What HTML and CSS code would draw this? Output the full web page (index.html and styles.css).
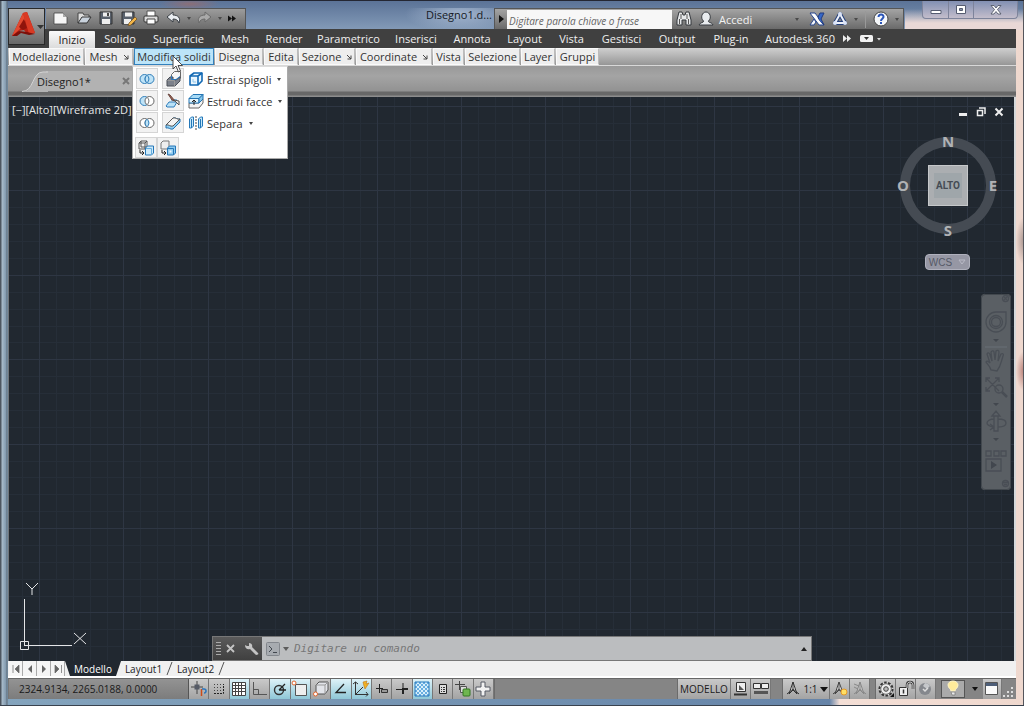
FILE: index.html
```html
<!DOCTYPE html>
<html lang="it">
<head>
<meta charset="utf-8">
<meta name="viewport" content="width=device-width, initial-scale=1">
<title>Disegno1.dwg</title>
<link rel="stylesheet" href="styles.css">
</head>
<body>
<div class="window">
  <header class="header">
    <button class="app-button" aria-label="Menu applicazione">
      <svg width="36" height="36" viewBox="0 0 36 36"><path d="M3 27 14 4l4-1 8 21-8 1-3-4-5 1-2 4z" fill="#b51e12"/><path d="M14 4l4-1 8 21-6 1z" fill="#d93a24"/><path d="M14 4 3 27l8-7 5-9z" fill="#e24a30"/><path d="M3 27l7-5 8 1 8 2-6 1-8-2-4 3z" fill="#7d0f0a"/><path d="M10 18l5-8 3 9-4 2z" fill="#8f140c"/><path d="M28 16h7l-3.500 4z" fill="#333"/></svg>
    </button>
    <div class="header-main">
      <div class="title-row">
        <div class="quick">
          <button aria-label="Nuovo"><svg width="18" height="16" viewBox="0 0 18 16"><path d="M2 3h9l4 4v7H2z" fill="#f6f6f6" stroke="#444" stroke-width=".8"/><path d="M11 3v4h4z" fill="#aaa"/></svg></button>
          <button aria-label="Apri"><svg width="18" height="16" viewBox="0 0 18 16"><path d="M3 13V3h5l1 2h5v2" fill="#ddd" stroke="#444"/><path d="M3 13 7 7h9l-4 6z" fill="#c9d2dc" stroke="#333"/></svg></button>
          <button aria-label="Salva"><svg width="18" height="16" viewBox="0 0 18 16"><path d="M3 2h12v12H3z" fill="#59616c" stroke="#333"/><path d="M6 2.500h7v4H6zM5 9h8v5H5z" fill="#eee"/><path d="M10 3h2v3h-2z" fill="#444"/></svg></button>
          <button aria-label="Salva con nome"><svg width="18" height="16" viewBox="0 0 18 16"><path d="M2 2h12v12H2z" fill="#59616c" stroke="#333"/><path d="M5 2.500h7v4H5zM4 9h7v5H4z" fill="#eee"/><path d="M9 13l6-6 2 2-6 6-3 1z" fill="#f1b448" stroke="#674a20" stroke-width=".7"/></svg></button>
          <button aria-label="Stampa"><svg width="18" height="16" viewBox="0 0 18 16"><path d="M5 6V1h8v5" fill="#fff" stroke="#555"/><rect x="2" y="6" width="14" height="6" rx="1" fill="#ddd" stroke="#333"/><path d="M5 9h8v5H5z" fill="#fff" stroke="#444"/></svg></button>
          <button aria-label="Annulla"><svg width="18" height="16" viewBox="0 0 18 16"><path d="M2 7l6-5v3c5 0 8 3 6 8-1-3-3-4-6-4v3z" fill="#e9edf1" stroke="#3b4046"/></svg></button>
          <i class="caret dim"></i>
          <button aria-label="Ripeti"><svg width="18" height="16" viewBox="0 0 18 16"><path d="M15 7 9 2v3c-5 0-8 3-6 8 1-3 3-4 6-4v3z" fill="#a9a9a9" stroke="#6a6a6a"/></svg></button>
          <i class="caret dim"></i>
          <button aria-label="Altro"><svg width="10" height="16" viewBox="0 0 10 16"><path d="M1 5.500l4 3-4 3zM5 5.500l4 3-4 3z" fill="#111"/></svg></button>
        </div>
        <div class="doc-title">Disegno1.d...</div>
        <div class="info-center">
          <button class="search-toggle" aria-label="Mostra ricerca"><svg width="12" height="20"><path d="M4 6l5 4-5 4z" fill="#111"/></svg></button>
          <input class="search" type="text" aria-label="Ricerca" placeholder="Digitare parola chiave o frase">
          <button aria-label="Cerca"><svg width="16" height="16" viewBox="0 0 16 16"><path d="M3 1h3l1 3h2l1-3h3l2 8v5h-5v-5H6v5H1V9z" fill="#e6e8ea" stroke="#34383d"/><path d="M3.500 8v5M12.500 8v5M5 3v5M11 3v5" stroke="#555"/></svg></button>
          <button class="sign-in"><svg width="16" height="16" viewBox="0 0 16 16"><path d="M1 14c1-3 5-2 4.500-4C2 7 4 1 8 1s6 6 2.500 9c-.5 2 3.500 1 4.500 4z" fill="#e9ecef" stroke="#373b40"/></svg><span>Accedi</span><i class="caret dim"></i></button>
          <button aria-label="Exchange"><svg width="16" height="16" viewBox="0 0 16 16"><path d="M1 2h5l9 12h-5z" fill="#f3f5fa" stroke="#28468e"/><path d="M15 2h-4L9 6l1.500 4L15 14l-3-6z" fill="#3768c8" stroke="#223c80"/><path d="M1 14l4-6 2 3-2 3z" fill="#f3f5fa" stroke="#28468e"/><path d="M2.500 3H5l8 10h-2z" fill="#fff"/></svg></button>
          <button class="share" aria-label="Connetti"><svg width="16" height="16" viewBox="0 0 16 16"><path d="M8 3 3 12h10z" fill="none" stroke="#25407c" stroke-width="4" stroke-linejoin="round"/><path d="M8 3 3 12h10z" fill="none" stroke="#eef2fa" stroke-width="2"/><circle cx="8" cy="3" r="2" fill="#dbe4f8"/><circle cx="3" cy="12" r="2" fill="#dbe4f8"/><circle cx="13" cy="12" r="2" fill="#dbe4f8"/></svg><i class="caret dim"></i></button>
          <span class="divider"></span>
          <button class="help" aria-label="Guida"><svg width="16" height="16" viewBox="0 0 16 16"><circle cx="8" cy="8" r="7" fill="#f5f7fa" stroke="#444"/><path d="M5.500 6c0-3.500 5.500-3 5 0-.3 1.700-2.500 1.800-2.500 4M8 11v2" fill="none" stroke="#2b55b8" stroke-width="2"/></svg><i class="caret dim"></i></button>
        </div>
        <div class="window-buttons">
          <button aria-label="Riduci a icona"><svg width="12" height="10"><path d="M1 5.500h10v3H1z" fill="#fff" stroke="#555c70"/></svg></button>
          <button aria-label="Ripristina"><svg width="12" height="10"><path d="M1.500.5h9v8h-9z" fill="#fff" stroke="#555c70"/><path d="M4.500 3.500h3v2h-3z" fill="#8a93a8" stroke="#555c70"/></svg></button>
          <button aria-label="Chiudi"><svg width="12" height="10"><path d="M1 .500h3l2 2.500 2-2.500h3L7.500 4.500 11 9H8L6 6.500 4 9H1l3.500-4.500z" fill="#fff" stroke="#454b5c" stroke-width=".8"/></svg></button>
        </div>
      </div>
      <nav class="ribbon-tabs">
        <button class="active">Inizio</button><button>Solido</button><button>Superficie</button><button>Mesh</button><button>Render</button><button>Parametrico</button><button>Inserisci</button><button>Annota</button><button>Layout</button><button>Vista</button><button>Gestisci</button><button>Output</button><button>Plug-in</button><button>Autodesk 360</button>
        <button class="more" aria-label="Altre schede"><svg width="40" height="9"><path d="M1 1l4 3.500L1 8zM5 1l4 3.500L5 8z" fill="#eee"/><rect x="18" y="1" width="13" height="7" rx="1.500" fill="#f2f2f2"/><path d="M22 3h5l-2.500 3z" fill="#333"/><path d="M35 4h4l-2 2.500z" fill="#ddd"/></svg></button>
      </nav>
    </div>
  </header>

  <div class="panels">
    <button>Modellazione</button>
    <button>Mesh <svg class="launch" viewBox="0 0 6 6"><path d="M1 1l4 4M5 1.500V5H1.500" /></svg></button>
    <div class="panel-open">
      <button class="selected">Modifica solidi</button>
      <div class="flyout">
        <div class="tool-row">
          <button class="tool" aria-label="Unione"><svg width="16" height="14" viewBox="0 0 16 14"><g fill="#bfe3f7" stroke="#2f7db8"><circle cx="5.500" cy="7" r="4.500"/><circle cx="10.500" cy="7" r="4.500"/><path d="M8 3.300a4.500 4.500 0 0 0 0 7.400 4.500 4.500 0 0 0 0-7.400z"/></g></svg></button>
          <button class="tool" aria-label="Premi o tira"><svg width="17" height="16" viewBox="0 0 17 16"><path d="M6.500 8V3.500l3-3h6V7l-4 4z" fill="#f7f7f7" stroke="#666"/><path d="M2 9l3-3h3v3h3l4-3v4l-5 5H2z" fill="#7c818b" stroke="#4a4e57"/><path d="M2.500 9.500h7V15" fill="none" stroke="#999"/><path d="M6.500 5v3.500h4.500l4-3" fill="none" stroke="#2c79bd"/></svg></button>
          <button class="action"><svg width="16" height="16" viewBox="0 0 16 16"><path d="M2 5l4-3h8v8l-4 4H2z" fill="#eaf6fd" stroke="#1268b3" stroke-width="1.600" stroke-linejoin="round"/><path d="M2 5h8v9M10 5l4-3" fill="none" stroke="#1268b3" stroke-width="1.600"/><path d="M5 8v3h3" fill="none" stroke="#8fc4ea"/></svg><span>Estrai spigoli</span><i class="caret"></i></button>
        </div>
        <div class="tool-row">
          <button class="tool" aria-label="Sottrai"><svg width="16" height="14" viewBox="0 0 16 14"><circle cx="5.500" cy="7" r="4.500" fill="#bfe3f7" stroke="#2f7db8"/><circle cx="10.500" cy="7" r="4.500" fill="#fff" stroke="#666"/><path d="M8 3.300a4.500 4.500 0 0 1 0 7.400" fill="none" stroke="#777"/></svg></button>
          <button class="tool" aria-label="Trancia"><svg width="17" height="16" viewBox="0 0 17 16"><path d="M1 13l3-4h8l-3 5H2z" fill="#b9e1f7" stroke="#2e7dbb"/><path d="M6 7h6" stroke="#2e7dbb"/><path d="M3 1l2 1 5 6-3-1z" fill="#a66553" stroke="#68463e"/><path d="M9 7l5 5v-4z" fill="#eee" stroke="#555"/></svg></button>
          <button class="action"><svg width="16" height="16" viewBox="0 0 16 16"><path d="M1 10h10l4-4v4l-4 5H1z" fill="#f3f3f3" stroke="#666"/><path d="M1 5.500l4-4h10l-4 4z" fill="#a8dbf6" stroke="#2374b3"/><path d="M1 5.500h10V10H1z" fill="#e2f4fc" stroke="#2374b3"/><path d="M11 5.500l4-4V6l-4 4z" fill="#86c7eb" stroke="#2374b3"/><path d="M6 12V7M4 9l2-2 2 2" fill="none" stroke="#222"/></svg><span>Estrudi facce</span><i class="caret"></i></button>
        </div>
        <div class="tool-row">
          <button class="tool" aria-label="Interseca"><svg width="16" height="14" viewBox="0 0 16 14"><circle cx="5.500" cy="7" r="4.500" fill="#fff" stroke="#666"/><circle cx="10.500" cy="7" r="4.500" fill="#fff" stroke="#666"/><path d="M8 3.300a4.500 4.500 0 0 0 0 7.400 4.500 4.500 0 0 0 0-7.400z" fill="#bfe3f7" stroke="#2f7db8"/></svg></button>
          <button class="tool" aria-label="Ispessisci"><svg width="17" height="16" viewBox="0 0 17 16"><path d="M1 10l7-7c3-1 4 2 7 1v3l-7 7c-3 1-4-2-7-1z" fill="#8fcdf0" stroke="#2575b5"/><path d="M1 10l7-7c3-1 4 2 7 1l-7 7c-3 1-4-2-7-1z" fill="#f4f4f4" stroke="#555"/></svg></button>
          <button class="action"><svg width="16" height="16" viewBox="0 0 16 16"><path d="M1.500 4l2-2h2v9l-2 2h-2zM3.500 4v9M10.500 4l2-2h2v9l-2 2h-2zM12.500 4v9" fill="#c5e7f8" stroke="#2578b9"/><path d="M8 1v14" stroke="#444" stroke-dasharray="2 1"/></svg><span>Separa</span><i class="caret"></i></button>
        </div>
        <div class="tool-row last">
          <button class="tool" aria-label="Imprimi"><svg width="17" height="16" viewBox="0 0 17 16"><path d="M1 3l2-2h6v6L7 9H1zM1 3h6v6M7 3l2-2M3 1v6h6" fill="none" stroke="#555"/><path d="M7.500 8l2-2h6v7l-2 2h-6z" fill="#cdeafa" stroke="#2477b8"/><path d="M8 8.500h5.500V15" fill="none" stroke="#66aede"/><path d="M2 10v3h3M4 11l2 2-2 2" fill="none" stroke="#222"/></svg></button>
          <button class="tool" aria-label="Scava solido"><svg width="17" height="16" viewBox="0 0 17 16"><path d="M1 3l2-2h6v6L7 9H1z" fill="#eee" stroke="#777"/><path d="M7.500 8l2-2h6v7l-2 2h-6z" fill="#8fcbf0" stroke="#2477b8"/><path d="M7.500 8.500h6V15" fill="none" stroke="#2477b8"/><path d="M9.500 10.500h2v2h-2z" fill="#eef8fe"/><path d="M2 10v3h3M4 11l2 2-2 2" fill="none" stroke="#222"/></svg></button>
        </div>
      </div>
      <svg class="cursor" width="12" height="18" viewBox="0 0 12 18"><path d="M1 1v13l3-3 2.500 6 2-1L6 10.500h4.500z" fill="#fff" stroke="#4a4a4a"/></svg>
    </div>
    <button>Disegna</button>
    <button>Edita</button>
    <button>Sezione <svg class="launch" viewBox="0 0 6 6"><path d="M1 1l4 4M5 1.500V5H1.500"/></svg></button>
    <button>Coordinate <svg class="launch" viewBox="0 0 6 6"><path d="M1 1l4 4M5 1.500V5H1.500"/></svg></button>
    <button>Vista</button>
    <button>Selezione</button>
    <button>Layer</button>
    <button>Gruppi</button>
  </div>

  <div class="file-tabs">
    <div class="file-tab">
      <svg class="tab-slope" width="26" height="21" viewBox="0 0 26 21"><path d="M0 21C12 21 10 1 21 1h5v20z" fill="#b2b2b2"/><path d="M0 20.500C12 20.500 10 1 21 1h5" fill="none" stroke="#d4d4d4"/></svg>
      <span>Disegno1*</span>
      <button aria-label="Chiudi disegno"><svg width="8" height="8"><path d="M1 1l6 6M7 1 1 7" stroke="#777" stroke-width="2"/></svg></button>
    </div>
  </div>

  <main class="canvas">
    <svg class="grid" width="100%" height="100%" aria-hidden="true">
      <defs><pattern id="grid" x="30" y="9" width="422" height="422" patternUnits="userSpaceOnUse">
        <path class="minor" d="M17.500 0v422M34.500 0v422M51.500 0v422M68.500 0v422M101.500 0v422M118.500 0v422M135.500 0v422M152.500 0v422M186.500 0v422M203.500 0v422M220.500 0v422M236.500 0v422M270.500 0v422M287.500 0v422M304.500 0v422M321.500 0v422M355.500 0v422M371.500 0v422M388.500 0v422M405.500 0v422M0 17.500h422M0 34.500h422M0 51.500h422M0 68.500h422M0 101.500h422M0 118.500h422M0 135.500h422M0 152.500h422M0 186.500h422M0 203.500h422M0 220.500h422M0 236.500h422M0 270.500h422M0 287.500h422M0 304.500h422M0 321.500h422M0 355.500h422M0 371.500h422M0 388.500h422M0 405.500h422"/>
        <path class="major" d="M.5 0v422M84.500 0v422M169.500 0v422M253.500 0v422M338.500 0v422M0 .5h422M0 84.500h422M0 169.500h422M0 253.500h422M0 338.500h422"/>
      </pattern></defs>
      <rect width="100%" height="100%" fill="url(#grid)"/>
    </svg>
    <div class="view-label">[−][Alto][Wireframe 2D]</div>
    <div class="doc-buttons">
      <button aria-label="Riduci"><svg width="10" height="10"><path d="M1 6h8v3H1z" fill="#eee"/></svg></button>
      <button aria-label="Ripristina"><svg width="10" height="10"><path d="M3 1h6v6M1.500 3.500h5v5h-5z" fill="none" stroke="#eee" stroke-width="1.500"/></svg></button>
      <button aria-label="Chiudi"><svg width="10" height="10"><path d="M1.500 1.500l7 7M8.500 1.500l-7 7" stroke="#eee" stroke-width="2"/></svg></button>
    </div>
    <div class="compass">
      <span class="north">N</span><span class="west">O</span><button class="cube"><span>ALTO</span></button><span class="east">E</span><span class="south">S</span>
    </div>
    <button class="wcs">WCS <svg width="8" height="6"><path d="M1 1h6L4 5z" fill="none" stroke="#b9bac6"/></svg></button>
    <div class="nav-bar">
      <svg width="30" height="196" viewBox="0 0 30 196"><g fill="none" stroke="#494e55" stroke-width="1.300"><circle cx="24.500" cy="4.500" r="3"/><path d="M23 3l3 3M26 3l-3 3"/><path d="M15 18h10v10a10 10 0 1 1-10-10z"/><circle cx="15" cy="28" r="6.500"/><circle cx="15" cy="28" r="4.500"/><path d="M4 53h22" stroke="#676d73"/><path d="M10 76c-1-4-4-6-5-8 1-2 3 0 4 1L6 60c1-2 3-1 3 1l2 6-1-9c1-2 3-1 3 0l1 8 1-9c1-1 3-1 3 1l-1 9 3-7c2-1 3 0 2 2-2 6-2 10-6 15z"/><path d="M5 84l13 13M18 84 5 97M5 88v-4h4M14 84h4v4M5 93v4h4"/><circle cx="18" cy="95" r="4"/><path d="M21 98l5 5" stroke-width="2.500"/><path d="M13 122h4v15h-4zM11 122l4-5 4 5zM17 125c5 0 8 1 8 4s-4 4-8 4M13 125c-4 0-7 2-7 4s2 3 6 4M9 130l4 3-4 3"/><path d="M5 157h5v5H5zM13 157h5v5h-5zM20 157h5v5h-5zM5 165h15v12H5z"/><circle cx="24.500" cy="189.500" r="3"/><path d="M22 188.500h5M23 190.500h3"/></g><g fill="#42474e"><path d="M12 45h6l-3 3zM12 109h6l-3 3zM12 144h6l-3 3zM10 167l6 4-6 4z"/></g></svg>
    </div>
    <svg class="ucs" width="84" height="74" viewBox="0 0 84 74"><g fill="none" stroke="#e4e5e7"><path d="M5.500 18v47M5.500 64.500H53M1.500 60.500h8v8h-8zM7 2l6 6 6-6M13 8v6M55 52l12 11M67 52 55 63"/></g></svg>
    <div class="command">
      <span class="grip"></span>
      <button aria-label="Chiudi riga di comando"><svg width="9" height="9"><path d="M1 1l7 7M8 1 1 8" stroke="#c4c4c4" stroke-width="1.800"/></svg></button>
      <button aria-label="Personalizza"><svg width="14" height="14" viewBox="0 0 14 14"><path d="M4 1L4 4 2 4 0 3c0 4 3 5 5 4l6 6c2 0 3-1 2-2L7 5c1-2-1-4-3-4z" fill="#c4c4c4"/></svg></button>
      <label class="prompt"><svg width="24" height="14" viewBox="0 0 24 14"><rect x=".5" y=".5" width="13" height="13" rx="1" fill="#a7abb0" stroke="#83878d"/><path d="M3 4l3 3-3 3M7 10.500h4" fill="none" stroke="#42484f"/><path d="M17 5h6l-3 4z" fill="#5c5c5c"/></svg><input type="text" placeholder="Digitare un comando" aria-label="Comando"></label>
      <button class="history" aria-label="Cronologia"><svg width="8" height="6"><path d="M1 5h6L4 1z" fill="#222"/></svg></button>
    </div>
  </main>

  <nav class="layout-tabs">
    <div class="steps">
      <button aria-label="Primo"><svg width="10" height="10"><path d="M2 1v8M8 1v8L4 5z" fill="#666" stroke="#666" stroke-width=".7"/></svg></button>
      <button aria-label="Precedente"><svg width="10" height="10"><path d="M7 1v8L3 5z" fill="#666"/></svg></button>
      <button aria-label="Successivo"><svg width="10" height="10"><path d="M3 1v8l4-4z" fill="#666"/></svg></button>
      <button aria-label="Ultimo"><svg width="10" height="10"><path d="M8.500 1v8M2 1v8l4-4z" fill="#666" stroke="#666" stroke-width=".7"/></svg></button>
    </div>
    <svg class="edge" width="5" height="15"><path d="M0 0h5v15z" fill="#212830"/></svg><button class="current">Modello</button><svg class="edge" width="5" height="15"><path d="M0 0h5L0 15z" fill="#212830"/></svg><button>Layout1</button><svg class="edge" width="7" height="15"><path d="M6 1 1 14" stroke="#555"/></svg><button>Layout2</button><svg class="edge" width="7" height="15"><path d="M6 1 1 14" stroke="#555"/></svg>
  </nav>

  <footer class="status">
    <output class="coords">2324.9134, 2265.0188, 0.0000</output>
    <div class="toggles">
      <button aria-label="Vincoli dedotti"><svg viewBox="0 0 18 18"><path d="M7 1v13M1 7h12" stroke="#444"/><path d="M4.500 4.500h5v5h-5z" fill="#555a66"/><path d="M11.500 9v7" stroke="#cc4b18" stroke-width="1.500"/><path d="M12 9h2a2 2 0 0 1 0 4" fill="none" stroke="#2b76bd" stroke-width="1.500"/></svg></button>
      <button aria-label="Snap"><svg viewBox="0 0 18 18"><path d="M4 4.500h9M4 7.500h9M4 10.500h9" stroke="#444" stroke-dasharray="1 2"/><path d="M4 13.500h9.500V4" fill="none" stroke="#222" stroke-dasharray="2 1"/></svg></button>
      <button class="on" aria-label="Griglia"><svg viewBox="0 0 18 18"><path d="M2.500 2.500h13v13h-13zM5.500 2v14M8.500 2v14M11.500 2v14M2 5.500h14M2 8.500h14M2 11.500h14" fill="#fff" stroke="#444"/></svg></button>
      <button aria-label="Orto"><svg viewBox="0 0 18 18"><path d="M2.500 2v12.500H16M2.500 9.500h5v5" fill="none" stroke="#555"/></svg></button>
      <button class="on" aria-label="Polare"><svg viewBox="0 0 18 18"><circle cx="8" cy="10" r="4.500" fill="none" stroke="#333" stroke-width="1.400"/><path d="M8 10h7M8 10l6-6" stroke="#222" stroke-width="1.300"/></svg></button>
      <button class="on" aria-label="Osnap"><svg viewBox="0 0 18 18"><path d="M4.500 4.500h11v11h-11z" fill="#eee" stroke="#555"/><circle cx="3" cy="3" r="2" fill="#fff" stroke="#e5662c"/></svg></button>
      <button aria-label="3D Osnap"><svg viewBox="0 0 18 18"><path d="M4 5l3-3h9v8l-3 4H4z" fill="#e2e4e9" stroke="#555"/><path d="M4 5h9v9M13 5l3-3" fill="none" stroke="#999"/><circle cx="3.500" cy="14" r="2" fill="#fff" stroke="#e5662c"/></svg></button>
      <button class="on" aria-label="Otrack"><svg viewBox="0 0 18 18"><path d="M12 4 4 12.500h10" fill="none" stroke="#222" stroke-width="1.300"/></svg></button>
      <button class="on" aria-label="UCS dinamico"><svg viewBox="0 0 18 18"><path d="M3.500 2v12.500H16M3 15l8-8M1 4l2.500-2L6 4M14 12l2 2.500-2 2" fill="none" stroke="#333"/><path d="M11 2l4-1-1 3 3-1-4 6-1-3z" fill="#f2b323" stroke="#c07615" stroke-width=".6"/></svg></button>
      <button aria-label="Input dinamico"><svg viewBox="0 0 18 18"><path d="M6.500 4v9M3 8.500h7" stroke="#222"/><path d="M8.500 9.500h6v3h-6z" fill="#999" stroke="#333"/></svg></button>
      <button aria-label="Spessore linea"><svg viewBox="0 0 18 18"><path d="M3 9.500h7M10 3v7" stroke="#222"/><path d="M10 8v6M9 9h6" stroke="#222" stroke-width="2"/></svg></button>
      <button class="on" aria-label="Trasparenza"><svg viewBox="0 0 18 18"><defs><pattern id="checks" width="4" height="4" patternUnits="userSpaceOnUse"><path fill="#6aaee0" d="M0 0h2v2H0zM2 2h2v2H2z"/></pattern></defs><path d="M2 2h14v14H2z" fill="#d8f0fb"/><path d="M2 2h14v14H2z" fill="url(#checks)" stroke="#2779bd"/></svg></button>
      <button aria-label="Proprietà rapide"><svg viewBox="0 0 18 18"><path d="M5.500 4.500h7v9h-7z" fill="#ddd" stroke="#222"/><path d="M7 7.500h1M7 9.500h1M7 11.500h1M9 7.500h2M9 9.500h2M9 11.500h2" stroke="#333"/></svg></button>
      <button aria-label="Selezione ciclica"><svg viewBox="0 0 18 18"><path d="M5.500 1v9M1 4.500h10" stroke="#444"/><path d="M6.500 6.500h6v6h-6z" fill="#ddd" stroke="#555"/><rect x="9" y="9" width="7" height="7" rx="1" fill="#6fb650" stroke="#347823"/></svg></button>
      <button aria-label="Monitor annotazioni"><svg viewBox="0 0 18 18"><path d="M7 2h4v5h5v4h-5v5H7v-5H2V7h5z" fill="#f1f1f1" stroke="#565b64"/></svg></button>
    </div>
    <div class="status-space"></div>
    <div class="view-tools">
      <button class="model">MODELLO</button>
      <button aria-label="Layout rapido"><svg viewBox="0 0 18 18"><path d="M4.500 2.500h9v9h-9z" fill="#eee" stroke="#333"/><path d="M7 5v5h5z" fill="#555"/><path d="M2 14.500h13" stroke="#333" stroke-width="2"/></svg></button>
      <button aria-label="Disegni rapidi"><svg viewBox="0 0 18 18"><path d="M1.500 3.500h7v5h-7zM9.500 3.500h7v5h-7z" fill="#eee" stroke="#333"/><path d="M2 11h14v3H2z" fill="#555"/></svg></button>
    </div>
    <div class="view-tools">
      <button class="scale"><svg viewBox="0 0 18 18"><path d="M9 2v7M9 9l-6 5M9 9l6 5M9 2l4 12-4-4-4 4z" fill="#eee" stroke="#333"/></svg><span>1:1</span><i class="caret big"></i></button>
      <button aria-label="Visibilità annotazioni"><svg viewBox="0 0 18 18"><path d="M8 2v7M8 9l-6 5M8 9l5 4M8 2l4 11-4-3-4 4z" fill="#eee" stroke="#444"/><circle cx="13" cy="12" r="3" fill="#ffdf65" stroke="#e59a27"/></svg></button>
      <button aria-label="Scala automatica"><svg viewBox="0 0 18 18"><path d="M9 2v7M9 9l-6 5M9 9l6 5M9 2l4 12-4-4-4 4zM3 4l5 2M3 7l4 2" fill="#ccc" stroke="#888"/></svg></button>
    </div>
    <div class="view-tools narrow">
      <button aria-label="Area di lavoro"><svg viewBox="0 0 18 18"><circle cx="9" cy="9" r="6.500" fill="#eee" stroke="#333" stroke-width="2" stroke-dasharray="2.500 1.500"/><circle cx="9" cy="9" r="5.300" fill="#eee" stroke="#666"/><circle cx="9" cy="9" r="2.300" fill="#bbb" stroke="#444"/><path d="M13 17l4-4v4z" fill="#111"/></svg></button>
      <button aria-label="Blocca interfaccia"><svg viewBox="0 0 18 18"><path d="M2.500 7.500h8v8h-8z" fill="#eee" stroke="#333"/><path d="M10 8V5c0-4 6-4 6 0v4" fill="none" stroke="#333" stroke-width="2.500"/><path d="M10 8V5c0-4 6-4 6 0v4" fill="none" stroke="#ddd"/><path d="M6.500 9.500v4" stroke="#333" stroke-width="1.500"/></svg></button>
      <button aria-label="Accelerazione hardware"><svg viewBox="0 0 18 18"><circle cx="8" cy="9" r="6" fill="#85888d"/><path d="M8 3a6 6 0 0 1 5 3l-3 3-4-3z" fill="#c5c7ca"/><path d="M6 9l2 2 3-3" fill="none" stroke="#ddd" stroke-width="1.500"/></svg></button>
    </div>
    <button class="bulb" aria-label="Isola oggetti"><svg viewBox="0 0 18 18"><path d="M7 11c0-2-3-3-3-6a5 4 0 0 1 10 0c0 3-3 4-3 6z" fill="#ffeb9b" stroke="#fff4c8"/><path d="M7 12h4v3H8z" fill="#e9e9e9" stroke="#777" stroke-width=".7"/></svg></button>
    <button class="tray" aria-label="Menu barra di stato"><i class="caret mid"></i></button>
    <button class="clean" aria-label="Schermo pulito"><svg viewBox="0 0 18 18"><path d="M2.500 2.500h12v12h-12z" fill="#fafafa" stroke="#555"/><path d="M3 3h11v3H3z" fill="#4d5e78"/></svg></button>
    <svg class="resize" viewBox="0 0 14 20"><path d="M9 8h2v2H9zM9 12h2v2H9zM5 12h2v2H5zM1 16h2v2H1zM5 16h2v2H5zM9 16h2v2H9z" fill="#ddd"/></svg>
  </footer>
</div>
</body>
</html>
```
FILE: styles.css
```css
* { box-sizing: border-box; }
body { margin: 0; font-family: "Open Sans", "Noto Sans", sans-serif; font-size: 11px; color: #333; }
button, input { font: inherit; color: inherit; border: 0; padding: 0; margin: 0; background: none; }
button { display: flex; align-items: center; justify-content: center; white-space: nowrap; }
svg { display: block; flex: none; }

.window {
  display: flex; flex-direction: column; height: 100vh; padding: 0 8px 6px;
  border-top: 1px solid #242733; border-bottom: 1px solid #39424e;
  background:
    linear-gradient(90deg, #4d5660 0 1px, #a9bccb 2px, #8199ae 6px, #5e6a76 7px, transparent 8px),
    linear-gradient(270deg, #55565c 0 1px, transparent 1px 8px) no-repeat 100% 0 / 8px 100%,
    radial-gradient(ellipse 30px 6px at 190px 3px, #8b6f78 0, transparent) no-repeat 0 0 / 100% 12px,
    linear-gradient(transparent 8px, #e9d8d6 22px) no-repeat 100% 0 / 119px 29px,
    linear-gradient(#5b7397, #849bb8) no-repeat 0 0 / 100% 29px,
    radial-gradient(ellipse 8px 20px at 100% 370px, #b98078, transparent),
    radial-gradient(ellipse 8px 24px at 100% 240px, #a99590, transparent),
    linear-gradient(90deg, #84a4bd, #6684a8 81%, #f4dfd6 82%, #efd8ce);
}

.header { display: flex; padding-top: 7px; background: linear-gradient(#404040, #404040) no-repeat 0 100% / 100% 19px; }
.app-button { width: 37px; height: 37px; border: 1px solid #292929; background: linear-gradient(#b2b2b2, #686868); }
.header-main { flex: 1; display: flex; flex-direction: column; min-width: 0; }
.title-row { display: flex; height: 21px; margin-left: 1px; }
.quick { display: flex; align-items: center; width: 200px; padding: 0 8px 2px 6px; justify-content: space-between; background: linear-gradient(#9c9c9c, #6b6b6b); border-top: 1px solid #555; border-right: 1px solid #555; }
.caret { display: inline-block; flex: none; border: 2px solid transparent; border-top: 3px solid #444; border-bottom: 0; }
.caret.dim { border-top-color: #4a4a4a; }
.caret.big { border-width: 5px 4px 0; border-top-color: #111; }
.caret.mid { border-width: 4px 3px 0; border-top-color: #111; }
.doc-title { flex: 1; min-width: 80px; overflow: hidden; text-align: right; color: #151a25; padding-right: 2px; line-height: 14px; background: radial-gradient(ellipse 55px 18px at calc(100% - 34px) 6px, #a3b5ce, transparent); }
.info-center { display: flex; align-items: center; width: 410px; background: linear-gradient(#a4a4a4, #6a6a6a); border: 1px solid #565656; border-bottom: 0; }
.search-toggle { width: 12px; }
.search { width: 165px; height: 19px; padding: 3px 2px 0; background: #f7f7f7; font-size: 10px; font-style: italic; margin-right: 4px; }
.search::placeholder { color: #666; opacity: 1; }
.sign-in { flex: 1; gap: 5px; margin: 0 10px 0 6px; color: #f2f2f2; }
.sign-in .caret { margin-left: auto; }
.share, .help { gap: 6px; }
.share { margin-left: 7px; }
.divider { width: 1px; height: 17px; background: #999; margin: 0 7px; }
.help { margin-right: 4px; }
.window-buttons { display: flex; width: 96px; height: 18px; margin: -7px -2px 0 18px; border: 1px solid #7e849b; border-top: 0; border-radius: 0 0 4px 4px; background: linear-gradient(#8290b3, #c3bdcb); }
.window-buttons button { width: 25px; }
.window-buttons button + button { border-left: 1px solid #7e849b; }
.window-buttons button:last-child { flex: 1; }

.ribbon-tabs { display: grid; grid-template-columns: 46px 50px 67px 46px 52px 77px 58px 54px 51px 43px 57px 54px 54px 84px 40px; height: 19px; padding-left: 4px; background: #404040; color: #f0f0f0; }
.ribbon-tabs .active { height: 17px; margin-top: 2px; background: linear-gradient(#fafafa, #dcdcdc); color: #222; border-radius: 1px 1px 0 0; }

.panels { display: grid; justify-content: start; grid-template-columns: 75px 48px 80px 48px 34px 56px 76px 31px 55px 34px 43px; gap: 1px; height: 18px; padding: 0 0 1px 1px; background: linear-gradient(#cfcfcf, #969696); border-bottom: 1px solid #d8d8d8; }
.panels > button { background: #eee; border: 1px solid #fafafa; border-right-color: #bbb; }
.launch { width: 6px; height: 6px; margin-left: 5px; fill: none; stroke: #444; }
.panel-open { position: relative; }
.panel-open .selected { width: 100%; height: 100%; background: #bce4f8; border: 1px solid #3381bd; }
.cursor { position: absolute; left: 38px; top: 7px; z-index: 3; }
.flyout { position: absolute; left: -2px; top: 18px; z-index: 2; width: 156px; padding: 1px 3px 0; background: #fff; border: 1px solid #aaa; border-top-color: #ddd; height: 93px; }
.tool-row { display: flex; height: 22px; gap: 4px; }
.tool { width: 22px; height: 21px; background: #f2f2f2; border: 1px solid #d5d5d5; }
.tool-row.last { gap: 0; margin: 3px 0 0 -1px; }
.action { gap: 3px; }
.action .caret { margin-left: 3px; }

.file-tabs { height: 31px; padding: 5px 0 0 14px; background: linear-gradient(#999 0, #a4a4a4 10px, #929292 25px, #686868 26px 29px, #8d8d8d 30px); }
.file-tab { display: flex; align-items: center; width: 110px; height: 20px; background: linear-gradient(90deg, transparent 24px, #b2b2b2 24px); color: #222; }
.file-tab span { margin: 0 auto 0 -11px; position: relative; }
.file-tab button { margin-right: 2px; }

.canvas { position: relative; flex: 1; min-height: 0; overflow: hidden; background: #212830; border-left: 1px solid #6f757b; border-right: 2px solid #d5d8da; }
.grid { position: absolute; inset: 0; fill: none; }
.minor { stroke: #262e38; }
.major { stroke: #2e3643; }
.view-label { position: absolute; left: 3px; top: 5px; color: #e8e8e8; line-height: 16px; }
.doc-buttons { position: absolute; right: 10px; top: 10px; display: flex; gap: 8px; }
.compass { position: absolute; right: 18px; top: 40px; width: 96px; height: 97px; border: 10px solid #454b53; border-radius: 50%; font: bold 15px/16px "Open Sans", sans-serif; color: #b0b2b5; }
.compass > span { position: absolute; width: 14px; height: 16px; text-align: center; }
.compass .north { left: 31px; top: -14px; }
.compass .south { left: 31px; bottom: -14px; }
.compass .west { left: -14px; top: 30px; }
.compass .east { right: -14px; top: 30px; }
.cube { position: absolute; inset: 18px; background: #abaeb1; border: 1px solid #c6c8ca; font: bold 10px "Liberation Sans Narrow", Roboto, sans-serif; color: #454c54; }
.cube span { padding: 7px 2px; background: #9fa6aa; }
.wcs { position: absolute; right: 44px; top: 157px; width: 45px; height: 16px; gap: 6px; background: #9697a4; border: 1px solid #b0b1bd; border-radius: 4px; font: 10px "Liberation Sans", sans-serif; color: #555966; }
.nav-bar { position: absolute; right: 3px; top: 197px; background: #5a5f64; border-radius: 4px; outline: 1px solid #42484e; outline-offset: -1px; }
.ucs { position: absolute; left: 10px; bottom: 6px; }
.command { position: absolute; left: 203px; right: 202px; bottom: 0; height: 25px; display: flex; align-items: center; background: linear-gradient(#5a5a5a, #404040); border: 1px solid #777; }
.grip { width: 5px; height: 16px; margin: 0 5px 0 3px; background: radial-gradient(circle, #aaa 1px, transparent 1px) 0 0 / 2px 3px; }
.command button { margin-right: 10px; }
.command .prompt { flex: 1; align-self: stretch; display: flex; align-items: center; gap: 4px; padding-left: 4px; margin-left: -7px; background: #bbbdbf; }
.prompt input { flex: 1; min-width: 0; background: none; font: italic 11px "DejaVu Sans Mono", monospace; color: #333; }
.prompt input::placeholder { color: #777; opacity: 1; }
.command .history { align-self: stretch; margin: 0; width: 14px; background: #bbbdbf; }

.layout-tabs { display: flex; height: 17px; padding-left: 1px; background: #f0f0f0; border-bottom: 2px solid #fff; font-size: 10px; color: #222; }
.steps { display: flex; }
.steps button { width: 14px; border-right: 1px solid #aaa; background: #f5f5f5; }
.layout-tabs > button { width: 45px; }
.layout-tabs > .current { width: 46px; background: #212830; color: #fff; }

.status { display: flex; height: 21px; background: #858585; border-top: 1px solid #666; border-left: 1px solid #777; font-size: 10px; color: #1a1a1a; }
.status svg { width: 18px; height: 18px; }
.coords { width: 180px; padding-left: 10px; line-height: 20px; background: linear-gradient(#939393, #7c7c7c); border-right: 1px solid #555; white-space: nowrap; }
.toggles { display: grid; grid-template-columns: repeat(15, 1fr); width: 305px; }
.toggles button, .view-tools button, .clean { min-width: 19px; background: linear-gradient(#c9c9c9, #a3a3a3); border-right: 1px solid #777; }
.toggles .on { background: linear-gradient(#def2f8, #8fc7d7); }
.status-space { flex: 1; border-left: 1px solid #6b6b6b; }
.view-tools { display: flex; margin-right: 11px; border-left: 1px solid #6b6b6b; }
.view-tools.narrow { margin: 0 5px 0 -6px; }
.view-tools button { width: 20px; }
.view-tools .model { width: 53px; }
.view-tools .scale { width: 47px; gap: 1px; }
.scale .caret { margin-left: 1px; }
.bulb { width: 24px; margin: 1px 0; background: #aaa; border: 1px solid #555; }
.tray { width: 18px; justify-content: flex-end; padding-right: 5px; }
.status .resize { width: 14px; height: 20px; }
```
